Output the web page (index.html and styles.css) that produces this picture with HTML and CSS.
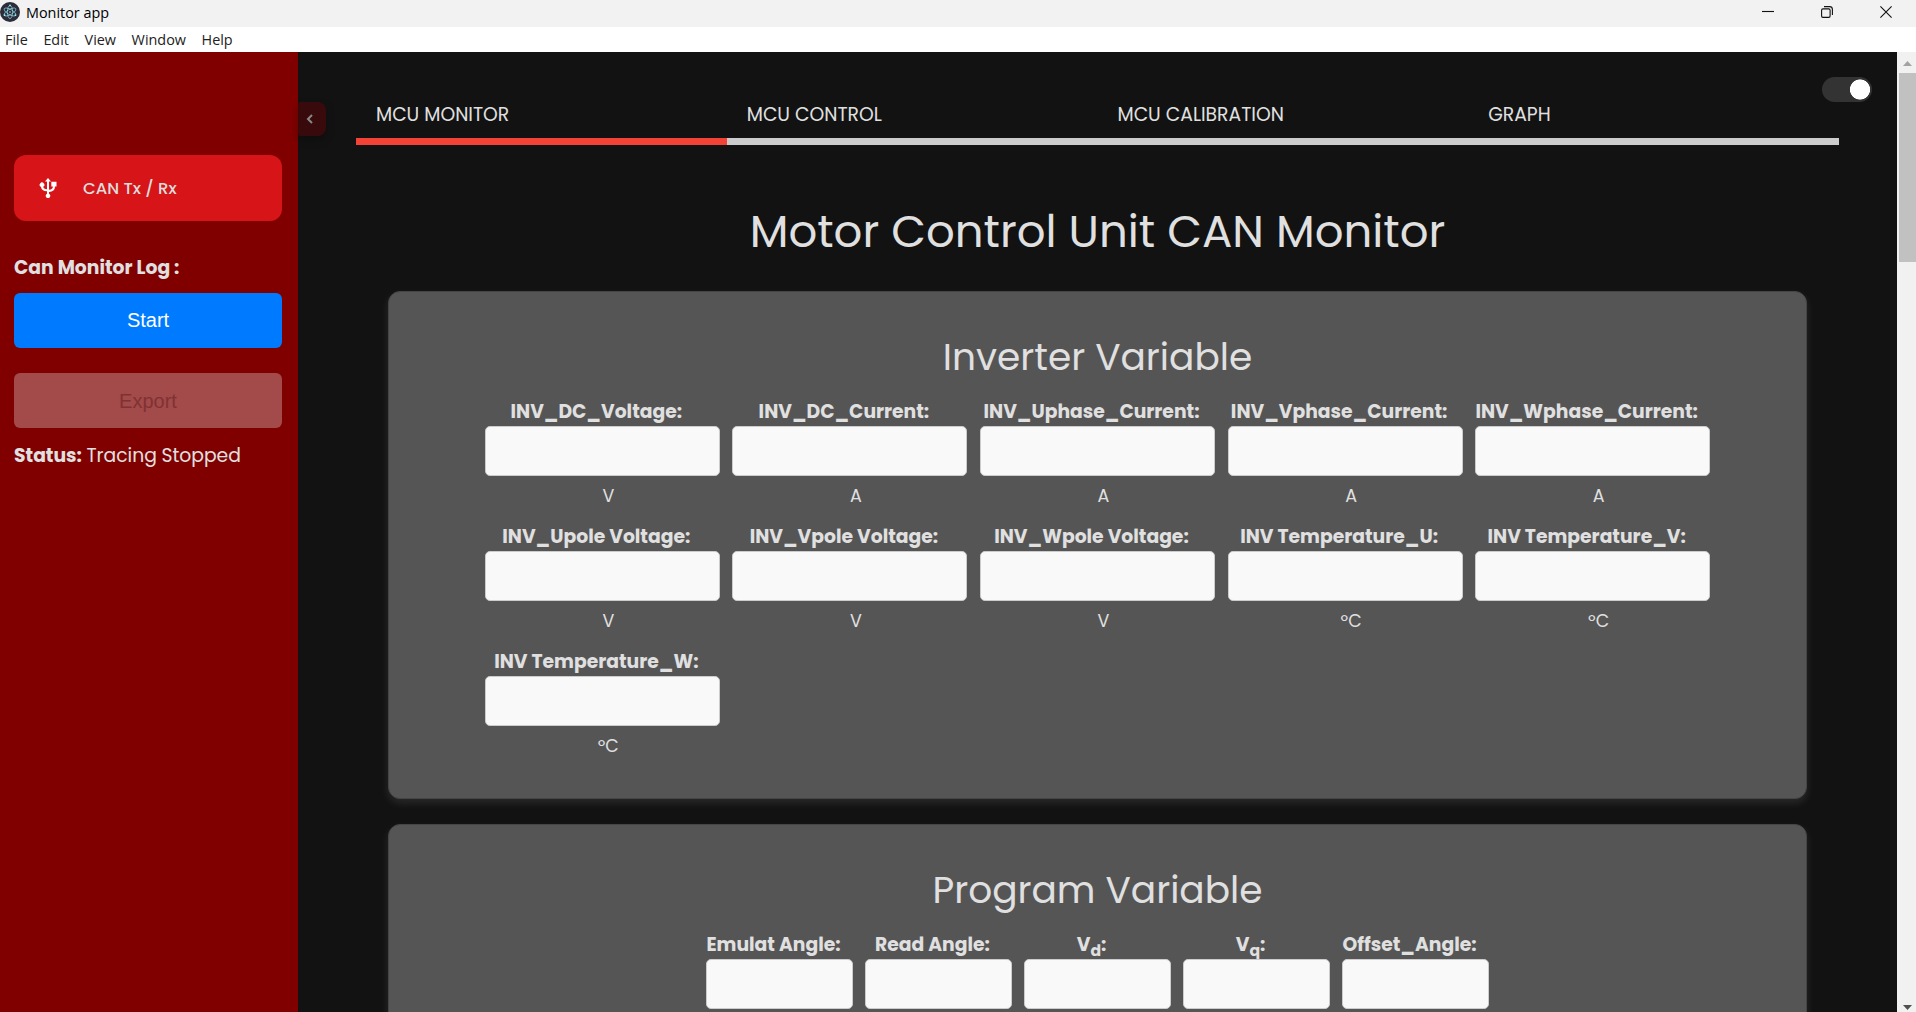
FILE: index.html
```html
<!DOCTYPE html>
<html lang="en">
<head>
<meta charset="utf-8">
<title>Monitor app</title>
<link rel="stylesheet" href="styles.css">
</head>
<body>
<header class="titlebar">
  <svg class="app-icon" viewBox="0 0 20 20"><circle cx="10" cy="10" r="10" fill="#2b2e3a"/><g fill="none" stroke="#9feaf9" stroke-opacity=".75" stroke-width=".8"><ellipse cx="10" cy="10" rx="6.6" ry="2.6" transform="rotate(30 10 10)"/><ellipse cx="10" cy="10" rx="6.6" ry="2.6" transform="rotate(90 10 10)"/><ellipse cx="10" cy="10" rx="6.6" ry="2.6" transform="rotate(150 10 10)"/></g><g fill="#9feaf9"><circle cx="10" cy="10" r=".8"/><circle cx="4.6" cy="13.2" r=".9"/><circle cx="15.4" cy="13.2" r=".9"/><circle cx="10" cy="3.4" r=".9"/></g></svg>
  <span class="app-name">Monitor app</span>
  <div class="window-controls">
    <svg viewBox="0 0 12 12"><path d="M0 5.5h12"/></svg>
    <svg viewBox="0 0 12 12"><rect x=".6" y="2.9" width="8.5" height="8.5" rx="1.3"/><path d="M3 .6h5.6a2.8 2.8 0 0 1 2.8 2.8V9"/></svg>
    <svg viewBox="0 0 12 12"><path d="M.4.4l11.2 11.2M11.6.4L.4 11.6"/></svg>
  </div>
</header>
<nav class="menubar"><span>File</span><span>Edit</span><span>View</span><span>Window</span><span>Help</span></nav>
<div class="workspace">
  <aside class="sidebar">
    <a class="nav-item">
      <svg class="usb" viewBox="0 0 18 20"><path d="M9 0l3 3.600h-2v8.200c2.600-.3 3.800-1.100 3.900-3.300H12.300V3.800h5.200v4.700H16c-.1 3.800-2.200 5.200-6 5.400v1.800a2.300 2.300 0 1 1-2 0v-2.500C4.200 12.900 2.300 11.600 2 8.900a2.300 2.300 0 1 1 2.200-.1c.3 1.500 1.400 2.200 3.800 2.400V3.600H6z"/></svg>
      <span>CAN Tx / Rx</span>
    </a>
    <h3 class="log-title">Can Monitor Log :</h3>
    <button class="btn start">Start</button>
    <button class="btn export" disabled>Export</button>
    <p class="status"><b>Status:</b> Tracing Stopped</p>
    <button class="collapse"><svg viewBox="0 0 8 10"><path d="M6 1L2 5l4 4"/></svg></button>
  </aside>
  <main class="main">
    <div class="switch"></div>
    <nav class="tabs">
      <a class="tab active">MCU MONITOR</a>
      <a class="tab">MCU CONTROL</a>
      <a class="tab">MCU CALIBRATION</a>
      <a class="tab">GRAPH</a>
    </nav>
    <h1>Motor Control Unit CAN Monitor</h1>
    <section class="card">
      <h2>Inverter Variable</h2>
      <div class="grid inverter">
        <div class="field"><label>INV_DC_Voltage:</label><input><small>V</small></div>
        <div class="field"><label>INV_DC_Current:</label><input><small>A</small></div>
        <div class="field"><label>INV_Uphase_Current:</label><input><small>A</small></div>
        <div class="field"><label>INV_Vphase_Current:</label><input><small>A</small></div>
        <div class="field"><label>INV_Wphase_Current:</label><input><small>A</small></div>
        <div class="field"><label>INV_Upole Voltage:</label><input><small>V</small></div>
        <div class="field"><label>INV_Vpole Voltage:</label><input><small>V</small></div>
        <div class="field"><label>INV_Wpole Voltage:</label><input><small>V</small></div>
        <div class="field"><label>INV Temperature_U:</label><input><small>ºC</small></div>
        <div class="field"><label>INV Temperature_V:</label><input><small>ºC</small></div>
        <div class="field"><label>INV Temperature_W:</label><input><small>ºC</small></div>
      </div>
    </section>
    <section class="card">
      <h2>Program Variable</h2>
      <div class="grid program">
        <div class="field"><label>Emulat Angle:</label><input></div>
        <div class="field"><label>Read Angle:</label><input></div>
        <div class="field"><label>V<sub>d</sub>:</label><input></div>
        <div class="field"><label>V<sub>q</sub>:</label><input></div>
        <div class="field"><label>Offset_Angle:</label><input></div>
      </div>
    </section>
  </main>
  <div class="scrollbar"><svg class="arrow" viewBox="0 0 9 5"><path d="M0 5L4.500 0 9 5z" fill="#a3a3a3"/></svg><div class="thumb"></div><svg class="arrow down" viewBox="0 0 9 5"><path d="M0 0h9L4.500 5z" fill="#505050"/></svg></div>
</div>
</body>
</html>
```
FILE: styles.css
```css
* { box-sizing: border-box; }
body {
  margin: 0;
  height: 1012px;
  overflow: hidden;
  display: flex;
  flex-direction: column;
  font-family: Poppins, Inter, sans-serif;
  color: #e0e0e0;
  background: #121212;
}
h1, h2, h3, p { margin: 0; font-weight: 400; }
button { font: inherit; border: 0; padding: 0; }

.titlebar {
  height: 27px;
  flex: none;
  display: flex;
  align-items: center;
  background: #f2f2f2;
  color: #000;
  font: 14.4px/27px "Open Sans", sans-serif;
}
.app-icon { width: 20px; height: 20px; margin: -3px 6px 0 0; }
.app-name { margin-top: -2px; }
.window-controls { margin-left: auto; padding: 0 24px 3px 0; display: flex; gap: 47px; }
.window-controls svg { width: 12px; height: 12px; fill: none; stroke: #111; stroke-width: 1.1; }
.menubar {
  height: 25px;
  flex: none;
  display: flex;
  gap: 15.6px;
  padding-left: 5px;
  background: #fff;
  color: #222;
  font: 14.4px/25px "Open Sans", sans-serif;
}

.workspace { flex: 1; min-height: 0; display: flex; }
.sidebar {
  position: relative;
  width: 298px;
  flex: none;
  padding: 103px 16px 0 14px;
  background: #800000;
}
.nav-item {
  display: flex;
  align-items: center;
  height: 66px;
  padding-left: 25px;
  gap: 26px;
  border-radius: 12px;
  background: #d71518;
  color: #ddd;
  font-size: 16.5px;
  font-weight: 500;
}
.usb { width: 18px; height: 20px; margin-bottom: 1px; fill: #fff; }
.log-title { margin-top: 30px; height: 42px; font-size: 18.75px; line-height: 33px; font-weight: 700; }
.btn {
  display: block;
  width: 268px;
  height: 55px;
  border-radius: 6px;
  font: 20px "Liberation Sans", sans-serif;
}
.start { background: #007bff; color: #fff; }
.export { margin-top: 25px; padding-top: 1px; background: #a34a4a; color: #803232; }
.status { margin-top: 12px; font-size: 18.75px; line-height: 31px; word-spacing: -.5px; white-space: nowrap; }
.collapse {
  position: absolute;
  left: 298px;
  top: 50px;
  width: 28px;
  height: 34px;
  display: grid;
  place-items: center;
  border-radius: 2px 8px 8px 2px;
  background: #380a0b;
  box-shadow: 0 4px 8px rgba(0, 0, 0, .25);
}
.collapse svg { width: 8px; height: 10px; margin-right: 4px; fill: none; stroke: #888; stroke-width: 2; }

.main {
  position: relative;
  flex: 1;
  min-width: 0;
  padding: 40px 58px 0;
  overflow: hidden;
}
.switch {
  position: absolute;
  top: 25px;
  right: 25px;
  width: 50px;
  height: 25px;
  border-radius: 13px;
  background: radial-gradient(circle at 38px 12.5px, #fff 9.7px, #333 10.4px);
}
.tabs { display: flex; }
.tab {
  flex: 1;
  height: 53px;
  padding-left: 20px;
  border-bottom: 7px solid #ccc;
  font-size: 18.75px;
  line-height: 45px;
}
.tab.active { border-color: #f44336; }
h1 { height: 146px; padding-top: 57px; text-align: center; font-size: 45px; line-height: 60px; white-space: nowrap; }

.card {
  height: 508px;
  margin: 0 32px 25px;
  padding-top: 35px;
  border: 1px solid #454545;
  border-radius: 12px;
  background: #555;
  box-shadow: 0 4px 8px rgba(255, 255, 255, .1);
}
h2 { height: 69px; text-align: center; font-size: 37.5px; line-height: 60px; }
.grid { display: grid; justify-content: center; }
.inverter { grid-template-columns: repeat(5, 235px); column-gap: 12.6px; grid-auto-rows: 125px; }
.program { grid-template-columns: repeat(5, 147px); column-gap: 12px; }
.field { display: flex; flex-direction: column; }
.field label {
  height: 30px;
  padding-right: 12px;
  text-align: center;
  font-size: 18.75px;
  line-height: 32px;
  font-weight: 700;
  white-space: nowrap;
}
.field label sub { font-size: 15.6px; line-height: 0; }
.field input {
  width: 100%;
  height: 50px;
  border: 1px solid #ccc;
  border-radius: 5px;
  background: #f9f9f9;
}
.field small { padding-left: 12px; text-align: center; font-size: 17.5px; line-height: 40px; }

.scrollbar {
  width: 19px;
  flex: none;
  display: flex;
  flex-direction: column;
  align-items: flex-end;
  background: #f1f1f1;
}
.thumb { width: 17px; height: 189px; margin-top: 7px; background: #c1c1c1; }
.arrow { width: 9px; height: 5px; margin: 9px 4px 0; }
.arrow.down { margin: auto 4px 2px; }
```
